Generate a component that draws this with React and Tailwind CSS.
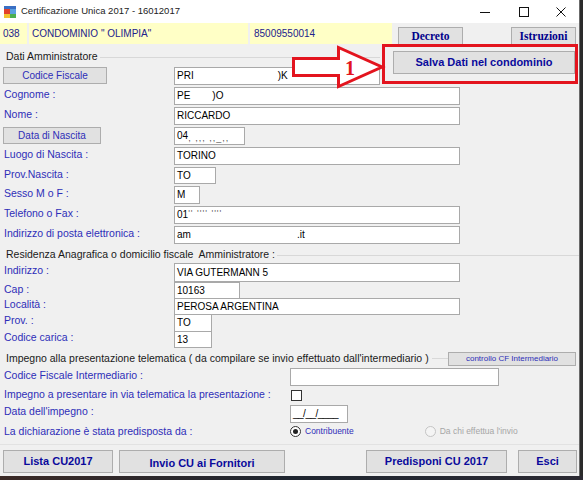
import React from 'react';

const Label = ({ children, className = '' }) => (
  <div className={`w-[174px] shrink-0 pl-[4px] text-[10.5px] leading-[12px] text-[#2e2eb8] ${className}`}>{children}</div>
);

const Box = ({ children, className = '' }) => (
  <div className={`bg-white border border-[#a9a9a9] pl-[2px] text-[10px] leading-none text-black flex items-center whitespace-nowrap overflow-hidden ${className}`}>
    {children}
  </div>
);

const WinButton = ({ children, className = '' }) => (
  <button className={`bg-[#e1e1e1] border border-[#adadad] flex items-center justify-center ${className}`}>{children}</button>
);

const GroupHeader = ({ children, className = '' }) => (
  <div className={`flex items-center ${className}`}>
    <span className="pl-[6px] pr-[2px] text-[10.5px] text-[#1a1a1a] whitespace-nowrap">{children}</span>
    <div className="flex-1 h-px bg-[#d8d8d8]"></div>
  </div>
);

const App = () => {
  return (
    <div className="w-[583px] h-[480px] overflow-hidden relative bg-[#2a2a2a] font-['Liberation_Sans',Arial,sans-serif]">
      <div className="w-[580px] h-[476px] bg-[#f0f0f0] flex flex-col border-r border-[#6b6b6b] relative">
        {/* title bar */}
        <div className="h-[23px] bg-white flex items-center shrink-0">
          <svg className="ml-[4px] mr-[5px]" width="12" height="12" viewBox="0 0 12 12">
            <rect x="0" y="0" width="12" height="3" fill="#3a6fc4" />
            <rect x="0" y="3" width="6" height="5" fill="#e2402a" />
            <rect x="6" y="3" width="6" height="5" fill="#5aa0e0" />
            <rect x="0" y="8" width="6" height="4" fill="#f2c230" />
            <rect x="6" y="8" width="6" height="4" fill="#4caf50" />
          </svg>
          <span className="text-[9.5px] text-[#222]">Certificazione Unica 2017 - 16012017</span>
          <div className="ml-auto mr-[0px] flex items-center">
            <div className="w-[39px] flex justify-center">
              <svg width="10" height="10" viewBox="0 0 10 10"><line x1="0" y1="5.5" x2="10" y2="5.5" stroke="#111" strokeWidth="1" /></svg>
            </div>
            <div className="w-[39px] flex justify-center">
              <svg width="10" height="10" viewBox="0 0 10 10"><rect x="0.5" y="0.5" width="9" height="9" fill="none" stroke="#111" strokeWidth="1" /></svg>
            </div>
            <div className="w-[36px] flex justify-center">
              <svg width="10" height="10" viewBox="0 0 10 10"><path d="M0.5 0.5 L9.5 9.5 M9.5 0.5 L0.5 9.5" stroke="#111" strokeWidth="1" /></svg>
            </div>
          </div>
        </div>

        {/* yellow header row */}
        <div className="h-[21px] flex shrink-0 text-[10px] text-[#22228c] bg-[#f0f0f0]">
          <div className="w-[27px] bg-[#ffffc6] flex items-center pl-[3px]">038</div>
          <div className="w-[219px] ml-[2px] bg-[#ffffc6] flex items-center pl-[3px]">CONDOMINIO " OLIMPIA"</div>
          <div className="w-[142px] ml-[2px] bg-[#ffffc6] flex items-center pl-[4px]">85009550014</div>
          <WinButton className="ml-[6px] mt-[4px] w-[65px] h-[19px] font-['Liberation_Serif',serif] font-bold text-[11.5px] text-[#00008b]">Decreto</WinButton>
          <WinButton className="ml-[48px] mt-[4px] w-[65px] h-[19px] font-['Liberation_Serif',serif] font-bold text-[11.5px] text-[#00008b]">Istruzioni</WinButton>
        </div>

        {/* Dati Amministratore */}
        <div className="h-[42px] flex shrink-0">
          <div className="w-[380px] pt-[5px]">
            <GroupHeader className="h-[16px]">Dati Amministratore</GroupHeader>
            <div className="h-[18px] mt-[2px] flex">
              <WinButton className="ml-[3px] w-[104px] h-[17px] text-[10px] text-[#2e2eb8]">Codice Fiscale</WinButton>
              <Box className="ml-[67px] w-[206px] h-[18px]">
                <span>PRI</span>
                <span className="ml-[84px]">)K</span>
              </Box>
            </div>
          </div>
          <div className="ml-[2px] w-[196px] h-[40px] border-[3px] border-[#e3141e]">
            <WinButton className="ml-[8px] mt-[4px] w-[182px] h-[23px] font-bold text-[11px] text-[#0a0a9c]">Salva Dati nel condominio</WinButton>
          </div>
        </div>

        <div className="h-[20px] flex shrink-0">
          <Label className="pt-[2px]">Cognome :</Label>
          <Box className="mt-[1px] w-[286px] h-[18px]">
            <span>PE</span>
            <span className="ml-[22px]">)O</span>
          </Box>
        </div>
        <div className="h-[20px] flex shrink-0">
          <Label className="pt-[2px]">Nome :</Label>
          <Box className="mt-[1px] w-[286px] h-[18px]">RICCARDO</Box>
        </div>
        <div className="h-[20px] flex shrink-0">
          <div className="w-[174px] shrink-0 pt-[1px]">
            <WinButton className="ml-[3px] w-[98px] h-[17px] border-[#0078d7] text-[10px] text-[#2e2eb8]">Data di Nascita</WinButton>
          </div>
          <Box className="mt-[1px] w-[71px] h-[18px]">
            <span>04</span>
            <span className="text-[#555] text-[9px] tracking-[1px] pt-[4px]">,  ,,, ,,_,,</span>
          </Box>
        </div>
        <div className="h-[20px] flex shrink-0">
          <Label className="pt-[2px]">Luogo di Nascita :</Label>
          <Box className="mt-[1px] w-[286px] h-[18px]">TORINO</Box>
        </div>
        <div className="h-[19px] flex shrink-0">
          <Label className="pt-[2px]">Prov.Nascita :</Label>
          <Box className="mt-[1px] w-[42px] h-[17px]">TO</Box>
        </div>
        <div className="h-[20px] flex shrink-0">
          <Label className="pt-[2px]">Sesso M o F :</Label>
          <Box className="mt-[1px] w-[26px] h-[18px]">M</Box>
        </div>
        <div className="h-[20px] flex shrink-0">
          <Label className="pt-[2px]">Telefono o Fax :</Label>
          <Box className="mt-[1px] w-[286px] h-[18px]">
            <span>01</span>
            <span className="text-[#666] text-[9px] tracking-[1px] pb-[4px]">'' '''' ''''</span>
          </Box>
        </div>
        <div className="h-[20px] flex shrink-0">
          <Label className="pt-[2px]">Indirizzo di posta elettronica :</Label>
          <Box className="mt-[1px] w-[286px] h-[18px]">
            <span>am</span>
            <span className="ml-[106px]">.it</span>
          </Box>
        </div>

        {/* Residenza */}
        <GroupHeader className="h-[18px] pt-[2px] shrink-0">Residenza Anagrafica o domicilio fiscale&nbsp; Amministratore :</GroupHeader>
        <div className="h-[19px] flex shrink-0">
          <Label className="pt-[1px]">Indirizzo :</Label>
          <Box className="w-[286px] h-[19px]">VIA GUTERMANN 5</Box>
        </div>
        <div className="h-[16px] flex shrink-0">
          <Label className="pt-[1px]">Cap :</Label>
          <Box className="w-[66px] h-[17px]">10163</Box>
        </div>
        <div className="h-[16px] flex shrink-0">
          <Label className="pt-[0px]">Località :</Label>
          <Box className="w-[286px] h-[17px]">PEROSA ARGENTINA</Box>
        </div>
        <div className="h-[17px] flex shrink-0">
          <Label className="pt-[0px]">Prov. :</Label>
          <Box className="w-[38px] h-[18px]">TO</Box>
        </div>
        <div className="h-[17px] flex shrink-0">
          <Label className="pt-[0px]">Codice carica :</Label>
          <Box className="w-[38px] h-[17px]">13</Box>
        </div>

        {/* Impegno */}
        <div className="h-[19px] mt-[1px] flex items-center shrink-0">
          <span className="pl-[6px] pr-[3px] text-[10.5px] text-[#1a1a1a] whitespace-nowrap">Impegno alla presentazione telematica ( da compilare se invio effettuato dall'intermediario )</span>
          <div className="flex-1 h-px bg-[#d8d8d8]"></div>
          <WinButton className="w-[128px] h-[14px] mr-[3px] text-[8px] text-[#2e2eb8]">controllo CF Intermediario</WinButton>
        </div>
        <div className="h-[19px] flex shrink-0">
          <div className="w-[290px] shrink-0 pl-[4px] text-[10.5px] leading-[12px] text-[#2e2eb8] pt-[1px]">Codice Fiscale Intermediario :</div>
          <Box className="w-[209px] h-[18px]"></Box>
        </div>
        <div className="h-[16px] flex items-center shrink-0">
          <div className="w-[291px] shrink-0 pl-[4px] text-[10.5px] text-[#2e2eb8]">Impegno a presentare in via telematica la presentazione :</div>
          <div className="w-[11px] h-[11px] bg-white border border-[#333]"></div>
        </div>
        <div className="h-[21px] flex shrink-0">
          <div className="w-[290px] shrink-0 pl-[4px] text-[10.5px] leading-[12px] text-[#2e2eb8] pt-[2px]">Data dell'impegno :</div>
          <Box className="mt-[2px] w-[58px] h-[18px] text-[10px] tracking-[-0.5px]">__/__/____</Box>
        </div>
        <div className="h-[15px] flex items-center shrink-0">
          <div className="w-[290px] shrink-0 pl-[4px] text-[10.5px] text-[#2e2eb8]">La dichiarazione è stata predisposta da :</div>
          <div className="w-[11px] h-[11px] rounded-full border border-[#333] bg-white flex items-center justify-center">
            <div className="w-[5px] h-[5px] rounded-full bg-[#222]"></div>
          </div>
          <span className="ml-[4px] text-[8.5px] text-[#2e2eb8]">Contribuente</span>
          <div className="ml-[71px] w-[11px] h-[11px] rounded-full border border-[#c4c4c4] bg-[#f4f4f4]"></div>
          <span className="ml-[4px] text-[8.5px] text-[#a6a6a6]">Da chi effettua l'invio</span>
        </div>

        <div className="h-px bg-[#e2e2e2] mt-[5px] shrink-0"></div>
        {/* bottom buttons */}
        <div className="h-[23px] mt-[5px] flex shrink-0 text-[11px] font-bold text-[#0a0a9c]">
          <WinButton className="ml-[3px] w-[110px] h-[23px]">Lista CU2017</WinButton>
          <WinButton className="ml-[6px] w-[166px] h-[23px] pt-[3px]">Invio CU ai Fornitori</WinButton>
          <WinButton className="ml-[81px] w-[141px] h-[23px]">Predisponi CU 2017</WinButton>
          <WinButton className="ml-[11px] w-[59px] h-[23px]">Esci</WinButton>
        </div>

        {/* annotation arrow */}
        <svg className="absolute left-[290px] top-[45px]" width="96" height="45" viewBox="0 0 96 45">
          <path d="M3.5 13.5 L48.5 13.5 L48.5 2.5 L92 22 L48.5 41.5 L48.5 30.5 L3.5 30.5 Z" fill="white" stroke="#e3141e" strokeWidth="3" strokeLinejoin="miter" />
          <text x="55" y="30" fill="#e3141e" fontFamily="Liberation Serif, serif" fontWeight="bold" fontSize="20">1</text>
        </svg>
      </div>
      <div className="h-[4px] bg-gradient-to-r from-[#3b2a26] via-[#1f2630] to-[#2c2a33]"></div>
    </div>
  );
};

export default App;
